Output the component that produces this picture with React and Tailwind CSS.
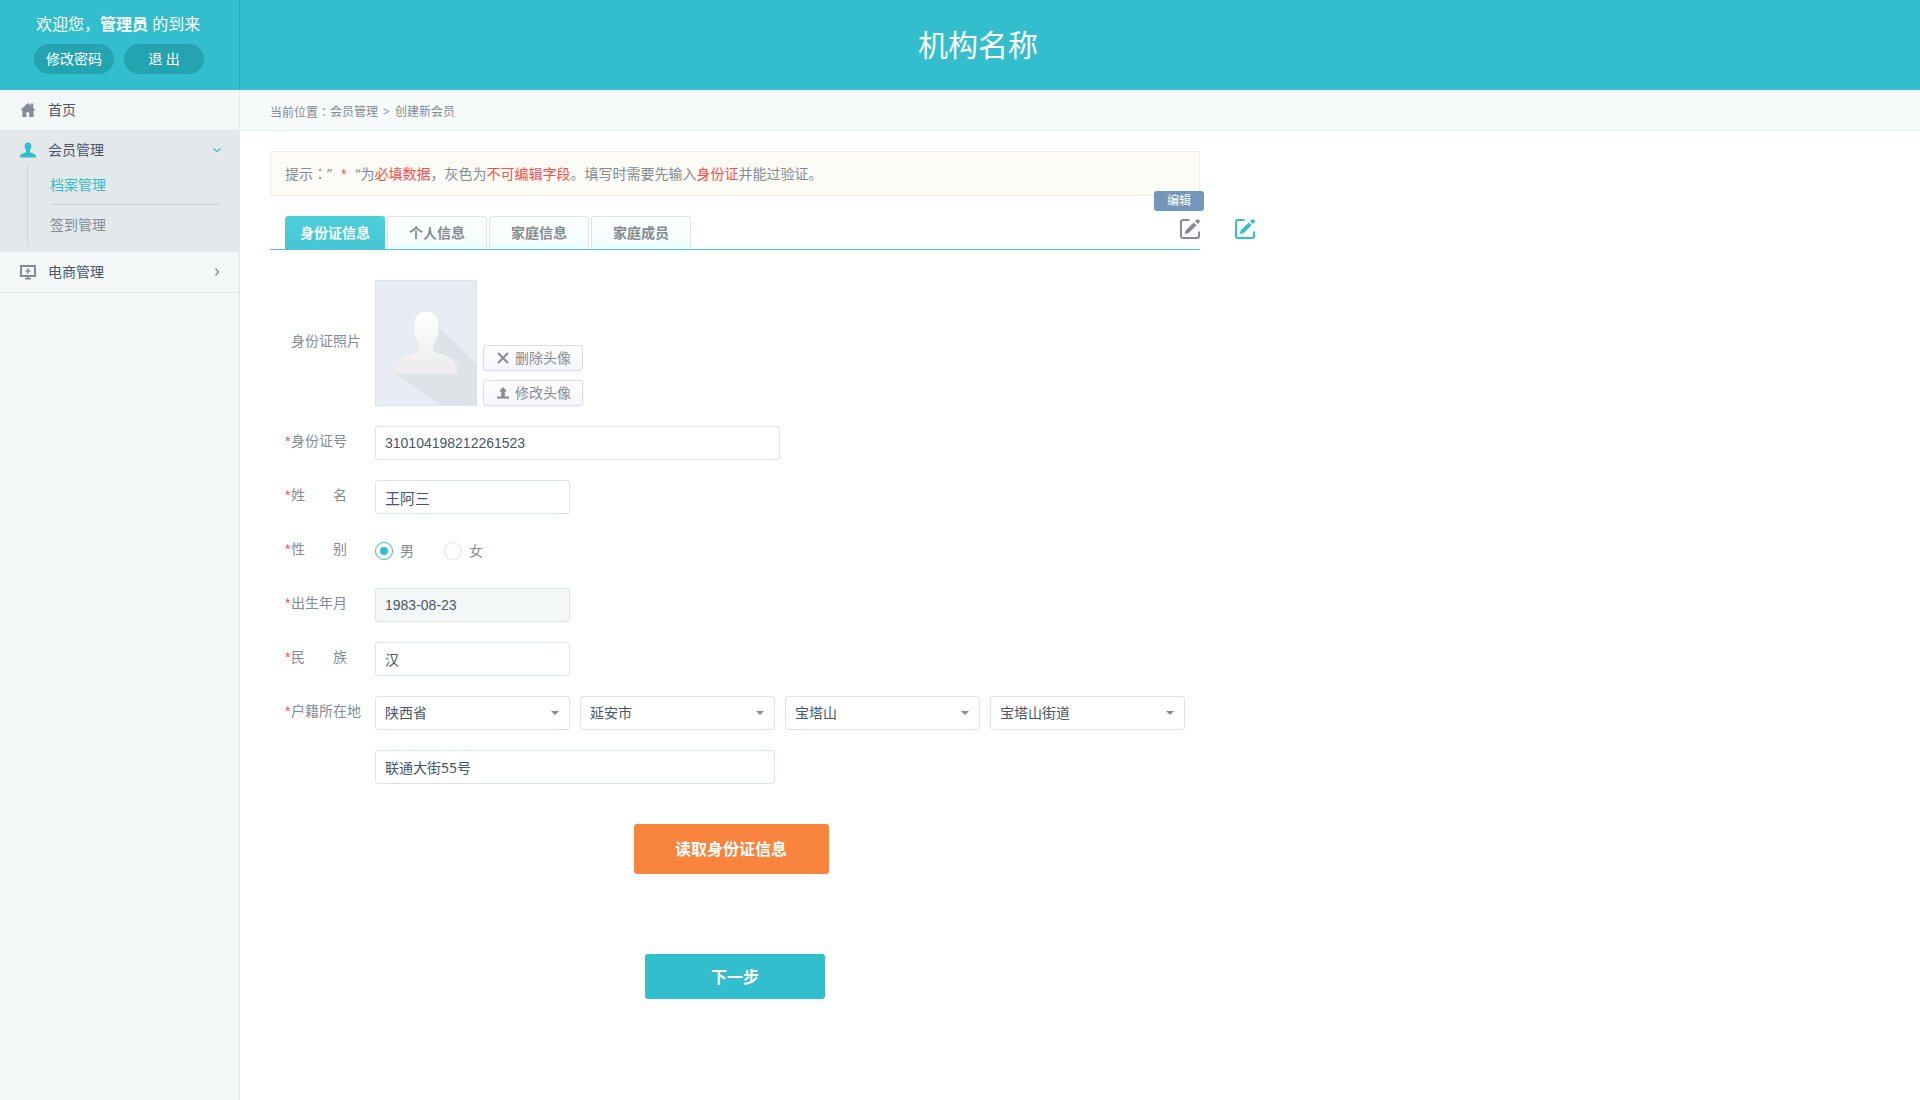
import React, { useState } from "react";
import { clsx } from "clsx";

const TABS = ["身份证信息", "个人信息", "家庭信息", "家庭成员"];

const REGIONS = [
  { id: "province", label: "省", options: ["陕西省"] },
  { id: "city", label: "市", options: ["延安市"] },
  { id: "district", label: "区", options: ["宝塔山"] },
  { id: "street", label: "街道", options: ["宝塔山街道"] },
];

const fieldClass =
  "h-[34px] rounded-[3px] border border-[#dce4e6] bg-white px-[9px] text-[#475669] outline-none focus:border-[#32becc]";

const HomeIcon = () => (
  <svg width="16" height="16" viewBox="0 0 16 16" fill="#848b94">
    <path d="M8 1 L.3 8.3 H2.4 V15 H6.3 V10.2 H9.2 V15 H13.6 V8.3 H15.7 L13.2 5.9 V1.6 H10.8 V3.6 Z" />
  </svg>
);

const UserIcon = () => (
  <svg width="16" height="16" viewBox="0 0 16 16" fill="#32becc">
    <path d="M8 .5C10.4.5 11.4 2 11.4 4C11.4 6 10.7 7.2 10 8.1V9.9C10.7 11 16 11.3 16 14V15.5H0V14C0 11.3 5.3 11 6 9.9V8.1C5.3 7.2 4.6 6 4.6 4C4.6 2 5.6.5 8 .5Z" />
  </svg>
);

const ShopIcon = () => (
  <svg width="16" height="16" viewBox="0 0 16 16" fill="#848b94">
    <path fillRule="evenodd" d="M0 1H16V13H0ZM2 3V11H14V3Z" />
    <path d="M9.4 3.6 L4.8 7.6 H7.3 L6.4 10.6 L11.2 6.4 H8.6 Z" />
    <path d="M7 13H9V14H11V15.4H5V14H7Z" />
  </svg>
);

const EditIcon = () => (
  <svg width="20" height="20" viewBox="0 0 20 20" fill="none" stroke="currentColor">
    <path d="M9.5 1H3Q1 1 1 3V17Q1 19 3 19H17Q19 19 19 17V12.5" strokeWidth="2" />
    <path d="M4.6 15.3 L5.9 11.3 L13.7 3.4 L16.6 6.3 L8.7 14.1 Z" fill="currentColor" stroke="none" />
    <path d="M15 2.3 L16.4 .9Q17.9 -.3 19.3 .9Q20.4 2.2 19.2 3.6L17.8 5Z" fill="currentColor" stroke="none" />
  </svg>
);

const Avatar = () => (
  <svg
    className="shrink-0 border border-[#dde2e6]"
    width="102"
    height="126"
    viewBox="0 0 100 124"
    role="img"
    aria-label="身份证照片"
  >
    <defs>
      <linearGradient id="bust" x1="0" y1="0" x2="0" y2="1">
        <stop offset="0" stopColor="#ffffff" />
        <stop offset="1" stopColor="#ebebed" />
      </linearGradient>
    </defs>
    <rect width="100" height="124" fill="#e7ecf2" />
    <path d="M61 45 L100 82 V124 H65 L20 93 L50 70Z" fill="#dee3e8" />
    <path
      d="M50.5 31C58 31 62 35 62 42V48C63 49 62.5 55 61 56C60 60 58.5 62 57 64V69C60 72 66 73 71 75C78 78 82 83 82 93H18.5C18.5 83 22 78 29 75C35 73 41 72 43.5 69V64C42 62 41 60 40 56C38.5 55 37.5 49 38.5 48V42C38.5 35 43 31 50.5 31Z"
      fill="url(#bust)"
    />
  </svg>
);

// full-width colon sitting in the middle of its cell
const Colon = () => <span className="font-['Noto_Sans_CJK_TC',sans-serif]">：</span>;

const Row = ({ label, htmlFor, children }) => {
  // two-character labels are spread to the width of four
  const spread = label.length === 2;
  return (
    <div className="flex">
      <label htmlFor={htmlFor} className="flex w-[90px] shrink-0 text-sm leading-[30px]">
        <span className="w-[6px] font-['Liberation_Sans',sans-serif] text-[#ff4d4f]">*</span>
        <span className={clsx(spread && "flex w-14 justify-between")}>
          {spread ? label.split("").map((c) => <span key={c}>{c}</span>) : label}
        </span>
      </label>
      {children}
    </div>
  );
};

const Sidebar = () => (
  <aside className="w-60 shrink-0 border-r border-[#e3e9eb] bg-[#f3f7f8] text-sm text-[#475669]">
    <a href="#home" className="flex h-10 items-center pl-5">
      <HomeIcon />
      <span className="ml-3">首页</span>
    </a>
    <div className="-mr-px bg-[#e3e9eb] pb-[6px]">
      <a href="#members" className="flex h-10 items-center pr-[19px] pl-5">
        <UserIcon />
        <span className="ml-3 flex-1">会员管理</span>
        <svg width="8" height="6" viewBox="0 0 8 6" fill="none" stroke="#32becc" strokeWidth="1.3">
          <path d="M.5 1.5 L4 4.5 L7.5 1.5" />
        </svg>
      </a>
      <div className="-mt-1 ml-[27px] border-l border-[#cdd3d6] pr-5 pb-[2px] pl-[22px]">
        <a href="#archives" className="flex h-[39px] items-center border-b border-[#cdd3d6] text-[#32becc]">
          档案管理
        </a>
        <a href="#checkin" className="flex h-[39px] items-center text-[#848b94]">
          签到管理
        </a>
      </div>
    </div>
    <a href="#shop" className="flex h-[41px] items-center border-b border-[#e0e6e8] pr-[19px] pl-5">
      <ShopIcon />
      <span className="ml-3 flex-1">电商管理</span>
      <svg width="6" height="8" viewBox="0 0 6 8" fill="none" stroke="#848b94" strokeWidth="1.3">
        <path d="M1.5 .5 L4.5 4 L1.5 7.5" />
      </svg>
    </a>
  </aside>
);

const PhotoButton = ({ icon, children }) => (
  <button
    type="button"
    className="flex h-[26px] w-[100px] items-center justify-center gap-[6px] rounded-[3px] border border-[#d9dde3] bg-linear-to-b from-white to-[#f4f5f9] pl-[2px] text-sm text-[#848b94] shadow-xs"
  >
    {icon}
    {children}
  </button>
);

export default function App() {
  const [tab, setTab] = useState(TABS[0]);
  const [gender, setGender] = useState("男");

  return (
    <div className="flex min-h-screen flex-col bg-white font-['Noto_Sans','Noto_Sans_CJK_SC',sans-serif] text-[#848b94]">
      <header className="flex h-[90px] items-stretch bg-[#32becc] text-white">
        <div className="w-60 shrink-0 border-r border-[#2bb0be] pt-3">
          <p className="pl-9 text-base leading-6">
            欢迎您，<b>管理员</b> 的到来
          </p>
          <div className="mt-2 flex gap-[10px] pl-[34px] text-sm">
            <button type="button" className="h-[30px] w-20 rounded-full bg-[#24a3b1]">
              修改密码
            </button>
            <button type="button" className="h-[30px] w-20 rounded-full bg-[#24a3b1]">
              退 出
            </button>
          </div>
        </div>
        <h1 className="flex flex-1 items-center justify-center pr-[204px] text-3xl">机构名称</h1>
      </header>

      <div className="flex flex-1">
        <Sidebar />
        <main className="min-w-0 flex-1">
          <nav className="flex h-[41px] items-center border-b border-[#e8eef0] bg-[#f7fafb] pt-1 pl-[30px] text-xs">
            <span>
              当前位置
              <Colon />
            </span>
            <a href="#members">会员管理</a>
            <span className="mx-[5px]">&gt;</span>
            <a href="#create">创建新会员</a>
          </nav>

          <div className="px-[30px] pt-5">
            <p className="h-[45px] max-w-[930px] border border-[#efefe9] bg-[#fcfbf5] px-[14px] text-sm leading-[43px]">
              提示
              <Colon />”
              <span className="mx-[9px] font-['Liberation_Sans',sans-serif] text-[#ff4d4f]">*</span>
              “为
              <span className="text-[#ff4d4f]">必填数据</span>，灰色为
              <span className="text-[#ff4d4f]">不可编辑字段</span>。填写时需要先输入
              <span className="text-[#ff4d4f]">身份证</span>并能过验证。
            </p>

            <div className="mt-5 flex gap-[35px]">
              <div className="flex h-[34px] w-full max-w-[930px] items-start gap-[2px] border-b border-[#4cc8d5] pl-[15px]">
                {TABS.map((name) => (
                  <button
                    key={name}
                    type="button"
                    onClick={() => setTab(name)}
                    className={clsx(
                      "h-[33px] w-[100px] rounded-t-[3px] text-sm font-bold",
                      tab === name
                        ? "bg-linear-to-b from-[#4dd0dc] to-[#46c6d4] text-white"
                        : "border border-b-0 border-[#dce4e6] bg-linear-to-b from-white to-[#f0fdfe]"
                    )}
                  >
                    {name}
                  </button>
                ))}
                <button type="button" aria-label="编辑" className="relative mt-[3px] ml-auto text-[#848b94]">
                  <EditIcon />
                  <span className="absolute -top-7 -right-1 h-5 w-[50px] rounded-[3px] bg-[#7397b8] text-xs leading-5 text-white">
                    编辑
                  </span>
                </button>
              </div>
              <button type="button" aria-label="编辑" className="mt-[3px] shrink-0 self-start text-[#32becc]">
                <EditIcon />
              </button>
            </div>

            <form className="flex max-w-[930px] flex-col pt-[30px]" onSubmit={(e) => e.preventDefault()}>
              <div className="flex flex-col gap-5 pl-[15px]">
                <div className="flex">
                  <span className="w-[90px] shrink-0 self-center pb-1 pl-[6px] text-sm">身份证照片</span>
                  <Avatar />
                  <div className="ml-[6px] flex flex-col justify-end gap-[9px]">
                    <PhotoButton
                      icon={
                        <svg width="12" height="12" viewBox="0 0 12 12" stroke="#848b94" strokeWidth="2">
                          <path d="M1 1 L11 11 M11 1 L1 11" />
                        </svg>
                      }
                    >
                      删除头像
                    </PhotoButton>
                    <PhotoButton
                      icon={
                        <svg width="12" height="12" viewBox="0 0 12 12" fill="#848b94">
                          <path d="M6 0 L10 4.5 H7.8 V9.5 H12 V11.5 H0 V9.5 H4.2 V4.5 H2 Z" />
                        </svg>
                      }
                    >
                      修改头像
                    </PhotoButton>
                  </div>
                </div>

                <Row label="身份证号" htmlFor="idno">
                  <input
                    id="idno"
                    defaultValue="310104198212261523"
                    className={clsx(fieldClass, "w-[405px] font-['Liberation_Sans',sans-serif] text-sm")}
                  />
                </Row>
                <Row label="姓名" htmlFor="name">
                  <input id="name" defaultValue="王阿三" className={clsx(fieldClass, "w-[195px] text-[15px]")} />
                </Row>
                <Row label="性别" htmlFor="gender-男">
                  <div className="flex h-[34px] items-center gap-[30px] text-sm">
                    {["男", "女"].map((g) => (
                      <label key={g} className="flex items-center gap-[7px]">
                        <input
                          id={`gender-${g}`}
                          type="radio"
                          name="gender"
                          checked={gender === g}
                          onChange={() => setGender(g)}
                          className="grid size-[18px] appearance-none place-content-center rounded-full border border-[#dce4e6] before:size-2 before:rounded-full checked:border-[#32becc] checked:before:bg-[#32becc]"
                        />
                        {g}
                      </label>
                    ))}
                  </div>
                </Row>
                <Row label="出生年月" htmlFor="birth">
                  <input
                    id="birth"
                    readOnly
                    value="1983-08-23"
                    className="h-[34px] w-[195px] rounded-[3px] border border-[#dce4e6] bg-[#f3f7f8] px-[9px] font-['Liberation_Sans',sans-serif] text-sm text-[#475669] outline-none"
                  />
                </Row>
                <Row label="民族" htmlFor="nation">
                  <input id="nation" defaultValue="汉" className={clsx(fieldClass, "w-[195px] text-sm")} />
                </Row>
                <Row label="户籍所在地" htmlFor="province">
                  <div className="flex flex-wrap gap-x-[10px] gap-y-5 text-sm">
                    {REGIONS.map(({ id, label, options }) => (
                      <div key={id} className="relative">
                        <select id={id} aria-label={label} className={clsx(fieldClass, "block w-[195px] appearance-none")}>
                          {options.map((o) => (
                            <option key={o}>{o}</option>
                          ))}
                        </select>
                        <svg
                          className="pointer-events-none absolute top-[15px] right-[11px]"
                          width="8"
                          height="4"
                          viewBox="0 0 8 4"
                          fill="#848b94"
                        >
                          <path d="M0 0 H8 L4 4 Z" />
                        </svg>
                      </div>
                    ))}
                    <input
                      aria-label="详细地址"
                      defaultValue="联通大街55号"
                      className={clsx(fieldClass, "w-[400px]")}
                    />
                  </div>
                </Row>
              </div>

              <button
                type="button"
                className="mt-10 mr-2 h-[50px] w-[195px] self-center rounded-[3px] bg-[#f9843e] text-base font-bold text-white"
              >
                读取身份证信息
              </button>
              <button
                type="submit"
                className="mt-20 h-[45px] w-[180px] self-center rounded-[3px] bg-[#32becc] text-base font-bold text-white"
              >
                下一步
              </button>
            </form>
          </div>
        </main>
      </div>
    </div>
  );
}
